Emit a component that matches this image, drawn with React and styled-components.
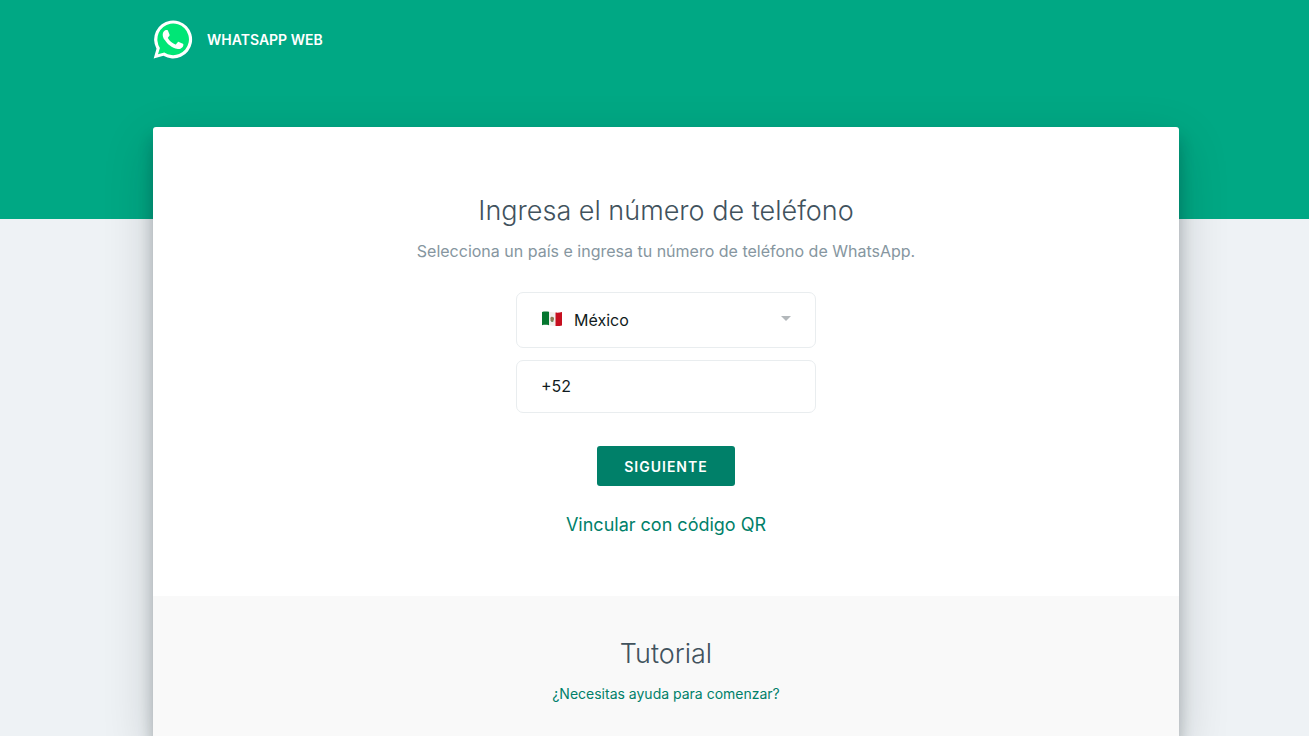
import React from 'react'
import styled, { createGlobalStyle } from 'styled-components'

const BRAND_COLOR = '#00a884'
const PRIMARY_COLOR = '#008069'
const TITLE_COLOR = '#41525d'
const MUTED_COLOR = '#8696a0'
const TEXT_COLOR = '#111b21'
const BORDER_COLOR = '#e9edef'
const PAGE_COLOR = '#eef2f5'

const COUNTRIES = [
	{ code: 'MX', name: 'México' },
]

function WhatsAppLogo() {
	return (
		<svg width="40" height="40" viewBox="0.5 0.5 40 40" aria-hidden="true">
			<path fill="#fff" d="M1.2 39 4 29.2A19 19 0 1 1 10.900 36.300Z" />
			<path fill="#00e676" d="M5.500 34.700 7.400 28.400A15.800 15.800 0 1 1 11.800 32.900Z" />
			<path
				fill="#fff"
				d="M15.6 11.400c-.4-.9-.8-.9-1.200-.9h-1c-.4 0-.9.200-1.400.700-.5.500-1.800 1.700-1.800 4.200s1.800 4.900 2.100 5.200c.3.300 3.500 5.600 8.700 7.600 4.300 1.700 5.200 1.400 6.100 1.300.9-.1 3-1.200 3.400-2.400.4-1.200.4-2.200.3-2.400-.1-.2-.5-.3-1-.6s-3-1.500-3.500-1.600c-.5-.2-.8-.3-1.100.2-.3.500-1.300 1.600-1.600 2-.3.300-.6.400-1.100.1-.5-.3-2.200-.8-4.100-2.500-1.500-1.400-2.600-3-2.900-3.500-.3-.5 0-.8.200-1.100l.8-.9c.3-.3.300-.5.500-.9.200-.3.100-.6 0-.9z"
			/>
		</svg>
	)
}

function MexicoFlag() {
	return (
		<Flag width="20" height="16" viewBox="0 0 20 16" aria-hidden="true">
			<path fill="#04762f" d="M0 1c2.300-.8 4.600-.6 7-.2v13.400c-2.400-.4-4.700-.6-7 .1z" />
			<path fill="#f1efec" d="M7 .8c2.200.4 4.200.8 6.500.8v13.400c-2.300 0-4.300-.4-6.500-.8z" />
			<path fill="#c60f1f" d="M13.500 1.600c2.200.2 4.300 0 6.500-.5v13.300c-2.200.6-4.300.8-6.500.6z" />
			<path fill="#8d7a52" d="M8.300 7c.6-1.500 2.200-1.800 3.200-.7.900 1 .7 2.800-.4 3.600-1.200.8-2.700.1-2.600-1.300z" />
			<path fill="#4f7a45" d="M8.500 9c1 1.400 2.300 1.500 3.400.2-.4 2.200-3 2.300-3.400-.2z" />
		</Flag>
	)
}

function LoginForm() {
	const [country, setCountry] = React.useState('MX')
	const [phone, setPhone] = React.useState('+52')

	return (
		<StyledForm onSubmit={e => e.preventDefault()}>
			<CountryField>
				<MexicoFlag />
				<CountrySelect
					aria-label="País"
					value={country}
					onChange={e => setCountry(e.target.value)}
				>
					{COUNTRIES.map(({ code, name }) => (
						<option key={code} value={code}>{name}</option>
					))}
				</CountrySelect>
				<Caret width="10" height="5" viewBox="0 0 10 5" aria-hidden="true">
					<path fill="#b3b8bb" d="M0 0h10L5 5z" />
				</Caret>
			</CountryField>
			<PhoneInput
				type="tel"
				aria-label="Número de teléfono"
				value={phone}
				onChange={e => setPhone(e.target.value)}
			/>
			<SubmitButton type="submit">Siguiente</SubmitButton>
		</StyledForm>
	)
}

export default function App() {
	return (
		<>
			<GlobalStyle />
			<Page>
				<Header>
					<WhatsAppLogo />
					<Brand>WhatsApp Web</Brand>
				</Header>
				<Card>
					<LoginSection>
						<Title>Ingresa el número de teléfono</Title>
						<Subtitle>Selecciona un país e ingresa tu número de teléfono de WhatsApp.</Subtitle>
						<LoginForm />
						<TextLink href="#qr" $large>Vincular con código QR</TextLink>
					</LoginSection>
					<TutorialSection>
						<Title as="h2">Tutorial</Title>
						<TextLink href="#ayuda">¿Necesitas ayuda para comenzar?</TextLink>
					</TutorialSection>
				</Card>
			</Page>
		</>
	)
}

const GlobalStyle = createGlobalStyle`
	* { box-sizing: border-box; }
	body {
		margin: 0;
		font-family: Inter, "Liberation Sans", sans-serif;
		color: ${TEXT_COLOR};
		background-color: ${PAGE_COLOR};
	}
	button, input, select { font-family: inherit; }
`

const Page = styled.div`
	display: flex;
	flex-direction: column;
	min-height: 100vh;
	padding: 0 130px 0 153px;
	overflow: hidden;
	background: linear-gradient(${BRAND_COLOR} 219px, ${PAGE_COLOR} 219px);
`

const Header = styled.header`
	display: flex;
	align-items: center;
	gap: 14px;
	height: 127px;
	padding-bottom: 48px;
`

const Brand = styled.span`
	font-size: 14px;
	line-height: 20px;
	font-weight: 600;
	text-transform: uppercase;
	color: #fff;
`

const Card = styled.main`
	display: flex;
	flex-direction: column;
	flex: 1;
	background-color: #fff;
	border-radius: 3px 3px 0 0;
	box-shadow: 0 17px 50px 0 rgba(11, 20, 26, .19), 0 12px 15px 0 rgba(11, 20, 26, .24);
`

const LoginSection = styled.section`
	display: flex;
	flex-direction: column;
	align-items: center;
	padding: 66px 24px 59px;
`

const TutorialSection = styled.section`
	display: flex;
	flex-direction: column;
	flex: 1;
	align-items: center;
	padding: 40px 24px 30px;
	background-color: #f9f9f9;
`

const Title = styled.h1`
	margin: 0 0 10px;
	font-size: 27px;
	line-height: 36px;
	font-weight: 300;
	color: ${TITLE_COLOR};
`

const Subtitle = styled.p`
	margin: 0 0 29px;
	font-size: 16px;
	line-height: 24px;
	color: ${MUTED_COLOR};
`

const StyledForm = styled.form`
	display: flex;
	flex-direction: column;
	align-items: center;
	width: 100%;
	max-width: 300px;
	margin-bottom: 27px;
`

const CountryField = styled.div`
	position: relative;
	width: 100%;
	margin-bottom: 12px;
`

const Flag = styled.svg`
	position: absolute;
	top: 19px;
	left: 26px;
	pointer-events: none;
`

const Caret = styled.svg`
	position: absolute;
	top: 24px;
	right: 25px;
	pointer-events: none;
`

const CountrySelect = styled.select`
	display: block;
	width: 100%;
	height: 56px;
	padding: 0 50px 0 57px;
	font-size: 16px;
	color: ${TEXT_COLOR};
	background-color: #fff;
	border: 1px solid ${BORDER_COLOR};
	border-radius: 7px;
	appearance: none;
`

const PhoneInput = styled.input`
	width: 100%;
	height: 53px;
	margin-bottom: 33px;
	padding: 0 24px 2px;
	font-size: 16px;
	color: ${TEXT_COLOR};
	background-color: #fff;
	border: 1px solid ${BORDER_COLOR};
	border-radius: 7px;
`

const SubmitButton = styled.button`
	height: 40px;
	padding: 0 27px;
	font-size: 14px;
	font-weight: 600;
	letter-spacing: 1px;
	text-transform: uppercase;
	color: #fff;
	background-color: ${PRIMARY_COLOR};
	border: 0;
	border-radius: 3px;
	cursor: pointer;
`

const TextLink = styled.a`
	font-size: ${({ $large }) => $large ? '18px' : '14px'};
	line-height: 24px;
	color: ${PRIMARY_COLOR};
	text-decoration: none;
`
